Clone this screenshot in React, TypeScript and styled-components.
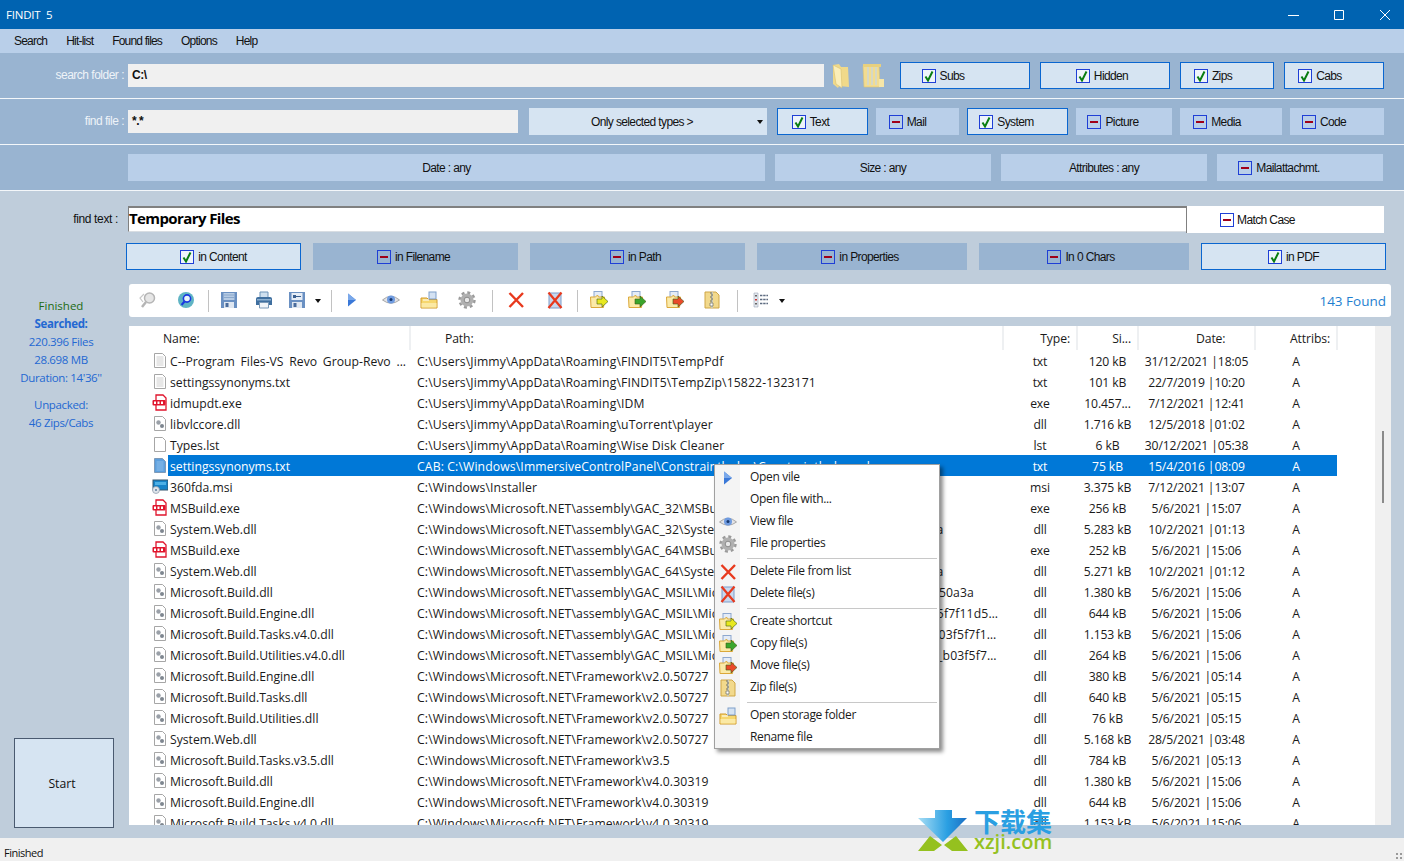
import React from "react";
import styled, { createGlobalStyle } from "styled-components";

const GlobalStyle = createGlobalStyle`
  html, body { margin: 0; padding: 0; background: #bfcddb; }
  * { box-sizing: border-box; }
`;

const Win = styled.div`
  position: relative;
  width: 1404px;
  height: 861px;
  overflow: hidden;
  background: #bfcddb;
  font-family: "Liberation Sans", Arial, sans-serif;
  font-size: 12px;
  letter-spacing: -0.62px;
  color: #111;
`;

const TitleBar = styled.div`
  height: 29px;
  background: #0063b1;
  color: #fff;
  display: flex;
  align-items: center;
  padding-left: 6px;
  font-family: "Open Sans", sans-serif;
  font-size: 11.5px;
  letter-spacing: -0.2px;
  white-space: pre;
`;

const WinControls = styled.div`
  margin-left: auto;
  margin-right: -4px;
  display: flex;
`;

const WinBtn = styled.div`
  width: 46px;
  height: 29px;
  display: flex;
  align-items: center;
  justify-content: center;
`;

const MenuBar = styled.div`
  height: 24px;
  background: #b9cfe9;
  display: flex;
  align-items: center;
  padding-left: 14px;
  gap: 19px;
  padding-bottom: 1px;
  letter-spacing: -0.8px;
`;

const Band = styled.div`
  height: 46px;
  background: #99b4d1;
  border-bottom: 1px solid #f4f7fa;
  display: flex;
  align-items: flex-start;
`;

const FieldLabel = styled.div`
  width: 125px;
  text-align: right;
  color: #eef3f8;
  line-height: 23px;
  margin-top: 11px;
  padding-right: 1px;
  letter-spacing: -0.5px;
`;

const PathInput = styled.div<{ $w: number; $top: number }>`
  width: ${(p) => p.$w}px;
  height: 23px;
  margin-left: 3px;
  margin-top: ${(p) => p.$top}px;
  background: #f0f0f0;
  line-height: 22px;
  padding-left: 4px;
  font-weight: bold;
  letter-spacing: -0.5px;
`;

const FolderSlot = styled.div<{ $w: number; $gap: number }>`
  width: ${(p) => p.$w}px;
  margin-left: ${(p) => p.$gap}px;
  margin-top: 9px;
  height: 26px;
`;

const OptBtn = styled.div<{
  $w: number;
  $gap: number;
  $on?: boolean;
  $dark?: boolean;
  $top?: number;
  $shift?: number;
}>`
  width: ${(p) => p.$w}px;
  height: 27px;
  margin-left: ${(p) => p.$gap}px;
  margin-top: ${(p) => p.$top ?? 8}px;
  padding-right: ${(p) => (p.$shift ?? 0) * 2}px;
  flex: none;
  display: flex;
  align-items: center;
  justify-content: center;
  gap: 4px;
  background: ${(p) => (p.$on ? "#d6e4f2" : p.$dark ? "#99b4d1" : "#b9cfe9")};
  border: ${(p) => (p.$on ? "1.5px solid #0a66d0" : "none")};
`;

const DropBtn = styled(OptBtn)`
  background: #d6e4f2;
  position: relative;
  &::after {
    content: "";
    position: absolute;
    right: 4px;
    top: 12px;
    border: 3px solid transparent;
    border-top: 4px solid #111;
    border-bottom: 0;
  }
`;

const Box = styled.span<{ $on?: boolean }>`
  width: 14px;
  height: 14px;
  flex: none;
  border: 1px solid #1f3fd6;
  display: inline-flex;
  align-items: center;
  justify-content: center;
  background: ${(p) => (p.$on ? "#eef4fa" : "transparent")};
  &::after {
    content: ${(p) => (p.$on ? "none" : '""')};
    width: 8px;
    height: 2px;
    background: #a00018;
  }
`;

const TextRow = styled.div`
  height: 26px;
  margin: 15px 0 0 128px;
  width: 1256px;
  display: flex;
  background: #fff;
  border-top: 2px solid #808080;
  border-left: 1px solid #808080;
  border-bottom: 1px solid #d8dde2;
`;

const FindLabel = styled.div`
  position: absolute;
  left: 0;
  top: 211px;
  width: 118px;
  text-align: right;
  line-height: 16px;
  letter-spacing: -0.35px;
`;

const FindValue = styled.div`
  flex: 1;
  font-size: 15px;
  font-weight: bold;
  font-family: "Open Sans", sans-serif;
  letter-spacing: -0.6px;
  line-height: 21px;
  color: #000;
`;

const MatchCase = styled.div`
  width: 198px;
  margin-top: -2px;
  height: 27px;
  background: #fff;
  border-left: 1px solid #808080;
  display: flex;
  align-items: center;
  justify-content: center;
  gap: 3px;
  padding-right: 56px;
`;

const ScopeRow = styled.div`
  display: flex;
  margin-left: 126px;
`;

const Stats = styled.div`
  position: absolute;
  left: 0;
  top: 297px;
  width: 122px;
  text-align: center;
  font-family: "Open Sans", sans-serif;
  font-size: 11.5px;
  letter-spacing: -0.35px;
  line-height: 18px;
  color: #2368d2;
`;

const Finished = styled.div`
  color: #1d6b12;
  letter-spacing: 0;
`;

const StatStrong = styled.div`
  font-weight: 700;
`;

const StatGap = styled.div`
  height: 9px;
`;

const StartBtn = styled.div`
  position: absolute;
  left: 14px;
  top: 738px;
  width: 100px;
  height: 90px;
  background: #d6e4f2;
  border: 1px solid #4a5a70;
  padding-right: 4px;
  display: flex;
  align-items: center;
  justify-content: center;
  font-family: "Open Sans", sans-serif;
  font-size: 12.2px;
  letter-spacing: 0;
`;

const ToolBar = styled.div`
  position: absolute;
  left: 129px;
  top: 284px;
  width: 1262px;
  height: 33px;
  background: #fff;
  border-radius: 3px;
`;

const ToolIcon = styled.div<{ $x: number }>`
  position: absolute;
  left: ${(p) => p.$x - 129 - 10}px;
  top: 6px;
  width: 20px;
  height: 20px;
`;

const ToolSep = styled.div<{ $x: number }>`
  position: absolute;
  left: ${(p) => p.$x - 129}px;
  top: 6px;
  width: 1px;
  height: 22px;
  background: #c2c2c2;
`;

const Caret = styled.div<{ $x: number }>`
  position: absolute;
  left: ${(p) => p.$x - 129 - 3}px;
  top: 15px;
  border: 3px solid transparent;
  border-top: 4px solid #111;
  border-bottom: 0;
`;

const Found = styled.div`
  position: absolute;
  right: 5px;
  top: 8px;
  font-family: "Open Sans", sans-serif;
  font-size: 13.5px;
  letter-spacing: 0;
  color: #1f7fd0;
`;

const ListPanel = styled.div`
  position: absolute;
  left: 129px;
  top: 326px;
  width: 1262px;
  height: 499px;
  background: #fff;
  overflow: hidden;
  font-family: "Open Sans", sans-serif;
  font-size: 12.2px;
  letter-spacing: -0.12px;
  color: #1a1a1a;
`;

const HeadRow = styled.div`
  height: 24px;
  position: relative;
`;

const HeadCell = styled.div<{ $x: number; $w: number; $align?: string; $pad?: number }>`
  position: absolute;
  left: ${(p) => p.$x - 129}px;
  width: ${(p) => p.$w}px;
  top: 0;
  height: 24px;
  line-height: 25px;
  text-align: ${(p) => p.$align ?? "left"};
  border-right: 2px solid #eef0f2;
  padding-right: 6px;
  padding-left: ${(p) => p.$pad ?? 0}px;
`;

const Row = styled.div`
  display: flex;
  height: 21px;
`;

const IconSlot = styled.div`
  width: 39px;
  padding-left: 24px;
  padding-top: 2px;
  flex: none;
`;

const RowBody = styled.div<{ $sel?: boolean }>`
  display: grid;
  grid-template-columns: 242px 593px 74px 61px 117px 82px;
  width: 1169px;
  height: 21px;
  overflow: hidden;
  line-height: 23px;
  background: ${(p) => (p.$sel ? "#0078d7" : "transparent")};
  color: ${(p) => (p.$sel ? "#fff" : "inherit")};
`;

const NameCell = styled.div`
  padding-left: 2px;
  letter-spacing: 0;
  word-spacing: 2.6px;
  white-space: pre;
  overflow: hidden;
`;

const PathCell = styled.div`
  padding-left: 7px;
  padding-right: 5px;
  letter-spacing: 0.13px;
  white-space: nowrap;
  overflow: hidden;
  text-overflow: ellipsis;
`;

const MidCell = styled.div`
  text-align: center;
  white-space: nowrap;
  overflow: hidden;
`;

const ScrollTrack = styled.div`
  position: absolute;
  left: 1246px;
  top: 0;
  width: 16px;
  height: 499px;
  background: #f0f0f0;
`;

const ScrollThumb = styled.div`
  position: absolute;
  left: 7px;
  top: 105px;
  width: 2px;
  height: 72px;
  background: #8a8a8a;
`;

const ContextMenu = styled.div`
  position: absolute;
  left: 714px;
  top: 464px;
  width: 226px;
  height: 285px;
  padding: 2px;
  background: linear-gradient(to right, #f4f4f4 0, #f4f4f4 25px, #fff 25px);
  border: 1px solid #a0a0a0;
  box-shadow: 3px 3px 4px rgba(0, 0, 0, 0.45);
  font-family: "Open Sans", sans-serif;
  font-size: 12px;
  letter-spacing: -0.33px;
  color: #1a1a1a;
`;

const MenuItem = styled.div`
  position: relative;
  height: 22px;
  line-height: 20px;
  padding-left: 33px;
`;

const MenuIcon = styled.div`
  position: absolute;
  left: 1px;
  top: 1px;
  width: 20px;
  height: 20px;
`;

const MenuSep = styled.div`
  height: 1px;
  margin: 3px 0 2px 30px;
  background: #c8c8c8;
`;

const StatusBar = styled.div`
  position: absolute;
  left: 0;
  top: 838px;
  width: 1404px;
  height: 23px;
  background: #f0f0f0;
  padding: 7px 0 0 4px;
  line-height: 15px;
  font-family: "Open Sans", sans-serif;
  font-size: 11px;
  letter-spacing: -0.5px;
`;

const Grip = styled.div`
  position: absolute;
  right: 1px;
  bottom: 1px;
  width: 8px;
  height: 8px;
  background-image: radial-gradient(#9a9a9a 1px, transparent 1.2px);
  background-size: 4px 4px;
`;

const Watermark = styled.div`
  position: absolute;
  left: 918px;
  top: 809px;
  width: 140px;
  height: 44px;
  pointer-events: none;
`;

const MarkCn = styled.div`
  position: absolute;
  left: 56px;
  top: -3px;
  font-family: "Noto Sans CJK SC", sans-serif;
  font-size: 26px;
  font-weight: 700;
  letter-spacing: 0;
  line-height: 30px;
  color: #2a9fe2;
  white-space: nowrap;
`;

const MarkEn = styled.div`
  position: absolute;
  left: 56px;
  top: 22px;
  font-family: "Open Sans", sans-serif;
  font-size: 20px;
  font-weight: 600;
  letter-spacing: 0;
  line-height: 22px;
  color: #95c11f;
  white-space: nowrap;
`;

const Check = () => (
  <svg width="12" height="12" viewBox="0 0 12 12">
    <path d="M2.5 6.5 5 10.5 9.5 1.5" fill="none" stroke="#0b7d12" strokeWidth="2" />
  </svg>
);

const CheckBox = ({ on }: { on?: boolean }) => <Box $on={on}>{on && <Check />}</Box>;

const Ico = ({ children }: { children: React.ReactNode }) => (
  <svg width="20" height="20" viewBox="0 0 20 20">
    {children}
  </svg>
);

const SearchGhost = () => (
  <Ico>
    <circle cx="11.5" cy="8" r="5" fill="#e6e6e6" stroke="#b5b5b5" strokeWidth="1.5" />
    <path d="M8 12 4 17" stroke="#b5b5b5" strokeWidth="2.5" />
    <path d="M6 4 2 8l3 4" fill="none" stroke="#c8c8c8" strokeWidth="1.2" />
  </Ico>
);

const SearchGlobe = () => (
  <Ico>
    <circle cx="10" cy="10" r="8" fill="#5fb4c4" />
    <circle cx="11" cy="8.5" r="3.6" fill="#e8f4fa" stroke="#1a38e0" strokeWidth="1.6" />
    <path d="M8.5 11.5 5.5 15" stroke="#1a38e0" strokeWidth="2" />
  </Ico>
);

const Floppy = ({ slip }: { slip?: boolean }) => (
  <Ico>
    <path d="M2 2h16v16H2z" fill="#6a90c2" />
    {slip ? (
      <>
        <path d="M4.5 3h11v7h-11z" fill="#e6edf6" />
        <path d="M6 5h3v3H6zM9 6h5v1H9z" fill="#3a5f90" />
      </>
    ) : (
      <path d="M4.5 3h11v7h-11z" fill="#b6cbe4" />
    )}
    {!slip && <path d="M4.5 5h11M4.5 7.5h11" stroke="#8aa8cc" />}
    <path d="M5 12h10v6H5z" fill="#dfe7f1" />
    <path d="M6.5 13h3v4h-3z" fill="#4a6c9c" />
  </Ico>
);

const Printer = () => (
  <Ico>
    <path d="M6 2h8v6H6z" fill="#cfe0ef" stroke="#6d93b8" />
    <path d="M2 8.5q0-1.5 2-1.5h12q2 0 2 1.5V15H2z" fill="#3f6f9f" />
    <path d="M5.5 12.5h9V18h-9z" fill="#f1f5f9" stroke="#7a99b8" />
    <path d="M3 9h14v1.5H3z" fill="#8db0d0" />
  </Ico>
);

const Play = () => (
  <Ico>
    <path d="M6 3.5 14 10l-8 6.5z" fill="#3a78d8" />
    <path d="M6 3.5 14 10H6z" fill="#7aa8ea" />
  </Ico>
);

const Eye = () => (
  <Ico>
    <path d="M1.5 10Q10 2.5 18.5 10 10 16.5 1.5 10z" fill="#e3e3e6" stroke="#a8a8a8" />
    <circle cx="10" cy="9.5" r="4" fill="#6f9be0" />
    <circle cx="10" cy="9.5" r="1.5" fill="#17386e" />
  </Ico>
);

const Gear = () => (
  <Ico>
    <circle cx="10" cy="10" r="6.5" fill="#b0b0b0" />
    <circle cx="10" cy="10" r="7.5" fill="none" stroke="#9a9a9a" strokeWidth="2.4" strokeDasharray="3 2.9" />
    <circle cx="10" cy="10" r="2.8" fill="#e8e8e8" stroke="#8b8b8b" />
  </Ico>
);

const FolderLook = () => (
  <Ico>
    <path d="M2 8h6l1.5 1.5H18V18H2z" fill="#f6d76e" stroke="#d19a2a" />
    <path d="M2.5 13h15v4.5h-15z" fill="#fbe9a4" />
    <rect x="10" y="2" width="7" height="7" fill="#d4e2f3" stroke="#7f9fca" />
    <path d="M4 10h6" stroke="#fff" />
  </Ico>
);

const RedX = () => (
  <Ico>
    <path d="M3.5 3 17 17M17 3 3.5 17" stroke="#e8391d" strokeWidth="2.4" />
  </Ico>
);

const DelDoc = () => (
  <Ico>
    <path d="M4 3h12v15H4z" fill="#c8d8ee" stroke="#7d9cc9" />
    <path d="M3.5 2.5 16.5 18M16.5 2.5 3.5 18" stroke="#e8391d" strokeWidth="2.2" />
  </Ico>
);

const FolderArrow = ({ color }: { color: string }) => (
  <Ico>
    <rect x="5" y="1.5" width="8" height="9" fill="#e4ecf7" stroke="#8ea8cf" />
    <path d="M1.5 7h5l2-2 1 2h6l-1 10.5H2z" fill="#fbeaa8" stroke="#dba83a" />
    <path d="M8 9h5V6l6 5.5-6 5.5v-3H8z" fill={color} stroke="#3c5a12" strokeWidth="0.6" />
  </Ico>
);

const ZipFolder = () => (
  <Ico>
    <path d="M3 2h11l3 3v13H3z" fill="#f2d98c" stroke="#cfa647" />
    <path d="M9 2h2v16H9z" fill="#c9c9b8" />
    <path d="M8 3h2M9 5h2M8 7h2M9 9h2M8 11h2" stroke="#6f6f60" />
    <path d="M8 13h3v3H8z" fill="#fff" stroke="#6f6f60" strokeWidth="0.7" />
  </Ico>
);

const ListView = () => (
  <Ico>
    <path d="M3 3h4v14H3z" fill="#e6eaf0" stroke="#9aa5b5" strokeWidth="0.6" />
    <path d="M4 5h2v1.5H4z" fill="#666" />
    <path d="M4 9h2v1.5H4z" fill="#c33" />
    <path d="M4 13h2v1.5H4z" fill="#666" />
    <path d="M9 5.5h8M9 9.5h8M9 13.5h8" stroke="#5d6b80" strokeWidth="1.4" strokeDasharray="2.4 .8" />
  </Ico>
);

const FolderPlain = () => (
  <svg width="20" height="27" viewBox="0 0 20 27">
    <path d="M2 3 8 2l2 3h7l1 20-10-1-1 2-5-4z" fill="#f0d98a" />
    <path d="M2 3l8 4 1 19-6-4z" fill="#fbeeb8" stroke="#d9c06f" strokeWidth="0.6" />
  </svg>
);

const FolderTree = () => (
  <svg width="24" height="27" viewBox="0 0 24 27">
    <path d="M2 4h16l1 21H3z" fill="#f2dc90" stroke="#dcc374" strokeWidth="0.6" />
    <path d="M6 5h2v18H6zM10 5h2v18h-2zM14 5h2v18h-2z" fill="#d6d8c4" />
    <path d="M18 17h5v8h-5z" fill="#f6e6a8" />
    <path d="M2 2h18v3H2z" fill="#e8d07e" />
  </svg>
);

type FileKind = "doc" | "dll" | "exe" | "blank" | "msi" | "sel";

const FileIcon = ({ kind }: { kind: FileKind }) => {
  if (kind === "exe") {
    return (
      <svg width="16" height="17" viewBox="0 0 16 17" style={{ marginLeft: -1 }}>
        <path d="M4 1h7l3 3v12H4z" fill="#fff" stroke="#e0142c" strokeWidth="1.3" />
        <rect x="0.5" y="6" width="13" height="5.5" rx="1" fill="#e0142c" />
        <path d="M2 7.5h2v2.5H2zM5.5 7.5h2v2.5h-2zM9 7.5h2v2.5H9z" fill="#fff" />
      </svg>
    );
  }
  if (kind === "msi") {
    return (
      <svg width="16" height="17" viewBox="0 0 16 17" style={{ marginLeft: -1 }}>
        <rect x="1" y="2" width="15" height="10" fill="#1683c8" stroke="#35566f" />
        <rect x="3" y="4" width="11" height="3" fill="#4db0e6" />
        <circle cx="4" cy="12" r="3.5" fill="#dfe4ea" stroke="#8a98a8" strokeWidth="0.7" />
        <circle cx="4" cy="12" r="1" fill="#5c7c9c" />
      </svg>
    );
  }
  const fill = kind === "sel" ? "#5c9fdd" : "#fff";
  const stroke = kind === "sel" ? "#7e9ab8" : "#a6a6a6";
  return (
    <svg width="14" height="17" viewBox="0 0 14 17">
      <path d="M1.5 1.5h8l3 3v11h-11z" fill={fill} stroke={stroke} />
      {(kind === "doc" || kind === "sel") && (
        <path
          d="M3.5 5h7M3.5 7h7M3.5 9h7M3.5 11h7M3.5 13h7"
          stroke={kind === "sel" ? "#8fc0ec" : "#cfcfcf"}
        />
      )}
      {kind === "dll" && (
        <>
          <circle cx="5.5" cy="7.5" r="2.2" fill="#9aa0a8" />
          <circle cx="9" cy="11" r="2" fill="#7e868f" />
        </>
      )}
    </svg>
  );
};

const D = "C:\\Windows\\Microsoft.NET\\";
const U = "C:\\Users\\Jimmy\\AppData\\Roaming\\";
const F2 = D + "Framework\\v2.0.50727";
const F4 = D + "Framework\\v4.0.30319";
const MSIL = D + "assembly\\GAC_MSIL\\";
const VER = "\\v4.0_4.0.0.0__b03f5f7f11d50a3a";

type FileRow = [FileKind, string, string, string, string, string];

const rows: FileRow[] = [
  ["doc", "C--Program Files-VS Revo Group-Revo ...", U + "FINDIT5\\TempPdf", "txt", "120 kB", "31/12/2021 |18:05"],
  ["doc", "settingssynonyms.txt", U + "FINDIT5\\TempZip\\15822-1323171", "txt", "101 kB", "22/7/2019 |10:20"],
  ["exe", "idmupdt.exe", U + "IDM", "exe", "10.457...", "7/12/2021 |12:41"],
  ["dll", "libvlccore.dll", U + "uTorrent\\player", "dll", "1.716 kB", "12/5/2018 |01:02"],
  ["blank", "Types.lst", U + "Wise Disk Cleaner", "lst", "6 kB", "30/12/2021 |05:38"],
  ["sel", "settingssynonyms.txt", "CAB: C:\\Windows\\ImmersiveControlPanel\\Constraintlndex\\Constraintlndex.cab", "txt", "75 kB", "15/4/2016 |08:09"],
  ["msi", "360fda.msi", "C:\\Windows\\Installer", "msi", "3.375 kB", "7/12/2021 |13:07"],
  ["exe", "MSBuild.exe", D + "assembly\\GAC_32\\MSBuild\\v4.0_4.0.0.0", "exe", "256 kB", "5/6/2021 |15:07"],
  ["dll", "System.Web.dll", D + "assembly\\GAC_32\\System.Web" + VER, "dll", "5.283 kB", "10/2/2021 |01:13"],
  ["exe", "MSBuild.exe", D + "assembly\\GAC_64\\MSBuild\\v4.0_4.0.0.0", "exe", "252 kB", "5/6/2021 |15:06"],
  ["dll", "System.Web.dll", D + "assembly\\GAC_64\\System.Web" + VER, "dll", "5.271 kB", "10/2/2021 |01:12"],
  ["dll", "Microsoft.Build.dll", MSIL + "Microsoft.Build" + VER, "dll", "1.380 kB", "5/6/2021 |15:06"],
  ["dll", "Microsoft.Build.Engine.dll", MSIL + "Microsoft.Build.Engine" + VER, "dll", "644 kB", "5/6/2021 |15:06"],
  ["dll", "Microsoft.Build.Tasks.v4.0.dll", MSIL + "Microsoft.Build.Tasks.v4.0" + VER, "dll", "1.153 kB", "5/6/2021 |15:06"],
  ["dll", "Microsoft.Build.Utilities.v4.0.dll", MSIL + "Microsoft.Build.Utilities.v4.0" + VER, "dll", "264 kB", "5/6/2021 |15:06"],
  ["dll", "Microsoft.Build.Engine.dll", F2, "dll", "380 kB", "5/6/2021 |05:14"],
  ["dll", "Microsoft.Build.Tasks.dll", F2, "dll", "640 kB", "5/6/2021 |05:15"],
  ["dll", "Microsoft.Build.Utilities.dll", F2, "dll", "76 kB", "5/6/2021 |05:15"],
  ["dll", "System.Web.dll", F2, "dll", "5.168 kB", "28/5/2021 |03:48"],
  ["dll", "Microsoft.Build.Tasks.v3.5.dll", D + "Framework\\v3.5", "dll", "784 kB", "5/6/2021 |05:13"],
  ["dll", "Microsoft.Build.dll", F4, "dll", "1.380 kB", "5/6/2021 |15:06"],
  ["dll", "Microsoft.Build.Engine.dll", F4, "dll", "644 kB", "5/6/2021 |15:06"],
  ["dll", "Microsoft.Build.Tasks.v4.0.dll", F4, "dll", "1.153 kB", "5/6/2021 |15:06"],
];

const menuGroups: [string, React.ReactNode][][] = [
  [
    ["Open vile", <Play />],
    ["Open file with...", null],
    ["View file", <Eye />],
    ["File properties", <Gear />],
  ],
  [
    ["Delete File from list", <RedX />],
    ["Delete file(s)", <DelDoc />],
  ],
  [
    ["Create shortcut", <FolderArrow color="#e8e81e" />],
    ["Copy file(s)", <FolderArrow color="#3aa52c" />],
    ["Move file(s)", <FolderArrow color="#ea4a2a" />],
    ["Zip file(s)", <ZipFolder />],
  ],
  [
    ["Open storage folder", <FolderLook />],
    ["Rename file", null],
  ],
];

const toolIcons: [number, React.ReactNode][] = [
  [148, <SearchGhost />],
  [186, <SearchGlobe />],
  [229, <Floppy />],
  [264, <Printer />],
  [297, <Floppy slip />],
  [352, <Play />],
  [391, <Eye />],
  [429, <FolderLook />],
  [467, <Gear />],
  [516, <RedX />],
  [555, <DelDoc />],
  [599, <FolderArrow color="#e8e81e" />],
  [637, <FolderArrow color="#3aa52c" />],
  [675, <FolderArrow color="#ea4a2a" />],
  [712, <ZipFolder />],
  [761, <ListView />],
];

export default function App() {
  return (
    <Win>
      <GlobalStyle />
      <TitleBar>
        {"FINDIT  5"}
        <WinControls>
          <WinBtn>
            <svg width="11" height="10" viewBox="0 0 11 10">
              <path d="M0 5.5h11" stroke="#fff" />
            </svg>
          </WinBtn>
          <WinBtn>
            <svg width="10" height="10" viewBox="0 0 10 10">
              <path d="M.5.5h9v9h-9z" fill="none" stroke="#fff" />
            </svg>
          </WinBtn>
          <WinBtn>
            <svg width="10" height="10" viewBox="0 0 10 10">
              <path d="M0 0l10 10M10 0 0 10" stroke="#fff" />
            </svg>
          </WinBtn>
        </WinControls>
      </TitleBar>

      <MenuBar>
        <span>Search</span>
        <span>Hit-list</span>
        <span>Found files</span>
        <span>Options</span>
        <span>Help</span>
      </MenuBar>

      <Band>
        <FieldLabel>search folder :</FieldLabel>
        <PathInput $w={696} $top={11}>C:\</PathInput>
        <FolderSlot $w={20} $gap={7}><FolderPlain /></FolderSlot>
        <FolderSlot $w={24} $gap={10}><FolderTree /></FolderSlot>
        <OptBtn $w={130} $gap={15} $on $top={9} $shift={22}><CheckBox on />Subs</OptBtn>
        <OptBtn $w={130} $gap={10} $on $top={9} $shift={3}><CheckBox on />Hidden</OptBtn>
        <OptBtn $w={94} $gap={10} $on $top={9} $shift={14}><CheckBox on />Zips</OptBtn>
        <OptBtn $w={100} $gap={10} $on $top={9} $shift={14}><CheckBox on />Cabs</OptBtn>
      </Band>

      <Band>
        <FieldLabel>find file :</FieldLabel>
        <PathInput $w={390} $top={11}>*.*</PathInput>
        <DropBtn $w={238} $gap={11} $top={9} $shift={6}>Only selected types &gt;</DropBtn>
        <OptBtn $w={91} $gap={10} $on $top={9} $shift={12}><CheckBox on />Text</OptBtn>
        <OptBtn $w={83} $gap={8} $top={9} $shift={10}><CheckBox />Mail</OptBtn>
        <OptBtn $w={101} $gap={8} $on $top={9} $shift={11}><CheckBox on />System</OptBtn>
        <OptBtn $w={96} $gap={8} $top={9} $shift={11}><CheckBox />Picture</OptBtn>
        <OptBtn $w={102} $gap={8} $top={9} $shift={14}><CheckBox />Media</OptBtn>
        <OptBtn $w={94} $gap={8} $top={9} $shift={13}><CheckBox />Code</OptBtn>
      </Band>

      <Band>
        <OptBtn $w={637} $gap={128} $top={9}>Date : any</OptBtn>
        <OptBtn $w={216} $gap={10} $top={9}>Size : any</OptBtn>
        <OptBtn $w={206} $gap={10} $top={9}>Attributes : any</OptBtn>
        <OptBtn $w={166} $gap={10} $top={9} $shift={21}><CheckBox />Mailattachmt.</OptBtn>
      </Band>

      <FindLabel>find text :</FindLabel>
      <TextRow>
        <FindValue>Temporary Files</FindValue>
        <MatchCase><CheckBox />Match Case</MatchCase>
      </TextRow>

      <ScopeRow>
        <OptBtn $w={175} $gap={0} $on $top={11}><CheckBox on />in Content</OptBtn>
        <OptBtn $w={205} $gap={12} $dark $top={11} $shift={2}><CheckBox />in Filename</OptBtn>
        <OptBtn $w={215} $gap={12} $dark $top={11} $shift={2}><CheckBox />in Path</OptBtn>
        <OptBtn $w={210} $gap={12} $dark $top={11} $shift={2}><CheckBox />in Properties</OptBtn>
        <OptBtn $w={210} $gap={12} $dark $top={11} $shift={3}><CheckBox />In 0 Chars</OptBtn>
        <OptBtn $w={185} $gap={12} $on $top={11}><CheckBox on />in PDF</OptBtn>
      </ScopeRow>

      <Stats>
        <Finished>Finished</Finished>
        <StatStrong>Searched:</StatStrong>
        <div>220.396 Files</div>
        <div>28.698 MB</div>
        <div>Duration: 14'36''</div>
        <StatGap />
        <div>Unpacked:</div>
        <div>46 Zips/Cabs</div>
      </Stats>

      <StartBtn>Start</StartBtn>

      <ToolBar>
        {toolIcons.map(([x, icon]) => (
          <ToolIcon key={x} $x={x}>{icon}</ToolIcon>
        ))}
        {[208, 331, 492, 577, 737].map((x) => (
          <ToolSep key={x} $x={x} />
        ))}
        <Caret $x={318} />
        <Caret $x={782} />
        <Found>143 Found</Found>
      </ToolBar>

      <ListPanel>
        <HeadRow>
          <HeadCell $x={129} $w={282} $pad={34}>Name:</HeadCell>
          <HeadCell $x={411} $w={593} $pad={34}>Path:</HeadCell>
          <HeadCell $x={1004} $w={74} $align="right">Type:</HeadCell>
          <HeadCell $x={1078} $w={61} $align="right">Si...</HeadCell>
          <HeadCell $x={1139} $w={117} $pad={57}>Date:</HeadCell>
          <HeadCell $x={1256} $w={82} $align="right">Attribs:</HeadCell>
        </HeadRow>
        {rows.map(([kind, name, path, type, size, date], i) => (
          <Row key={i}>
            <IconSlot><FileIcon kind={kind} /></IconSlot>
            <RowBody $sel={kind === "sel"}>
              <NameCell>{name}</NameCell>
              <PathCell>{path}</PathCell>
              <MidCell>{type}</MidCell>
              <MidCell>{size}</MidCell>
              <MidCell>{date}</MidCell>
              <MidCell>A</MidCell>
            </RowBody>
          </Row>
        ))}
        <ScrollTrack>
          <ScrollThumb />
        </ScrollTrack>
      </ListPanel>

      <ContextMenu>
        {menuGroups.map((group, g) => (
          <React.Fragment key={g}>
            {g > 0 && <MenuSep />}
            {group.map(([label, icon]) => (
              <MenuItem key={label}>
                <MenuIcon>{icon}</MenuIcon>
                {label}
              </MenuItem>
            ))}
          </React.Fragment>
        ))}
      </ContextMenu>

      <StatusBar>
        Finished
        <Grip />
      </StatusBar>

      <Watermark>
        <svg width="54" height="44" viewBox="0 0 54 44">
          <defs>
            <linearGradient id="mark" x1="0" x2="1" y1="0" y2="0">
              <stop offset="0" stopColor="#a8def5" />
              <stop offset="0.6" stopColor="#2a9fe2" />
              <stop offset="1" stopColor="#1b6fc4" />
            </linearGradient>
          </defs>
          <path d="M17 1h17v8h15L25 33 0 9h17z" fill="url(#mark)" />
          <path d="M0 42 12 27l12 9-8 6zM50 42 38 27l-12 9 8 6z" fill="#95c11f" />
        </svg>
        <MarkCn>下载集</MarkCn>
        <MarkEn>xzji.com</MarkEn>
      </Watermark>
    </Win>
  );
}
